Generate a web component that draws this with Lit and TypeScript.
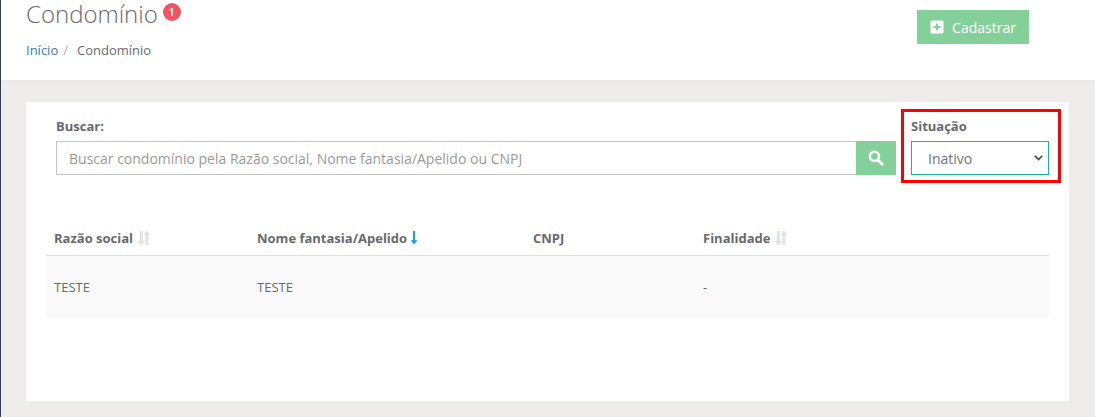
import { css, html, LitElement } from "lit";
import { customElement } from "lit/decorators.js";

const sortIcon = html`<svg class="sort" width="14" height="16" viewBox="0 0 14 16">
  <path d="M2.800 1h3v10h2.200L4.300 15.500.6 11h2.200z" fill="#e2e2e2"></path>
  <path d="M8.400 5H6.200L9.900.5 13.600 5h-2.200v10h-3z" fill="#e2e2e2"></path>
</svg>`;

const columns = [
  { label: "Razão social", width: 203, icon: sortIcon },
  {
    label: "Nome fantasia/Apelido",
    width: 276,
    icon: html`<svg class="sort active" width="8" height="15" viewBox="0 0 8 15">
      <path d="M2.900 1h2.200v9.200h2.400L4 14.400.5 10.200h2.400z" fill="#1c9cf0"></path>
    </svg>`,
  },
  { label: "CNPJ", width: 170, icon: null },
  { label: "Finalidade", width: 0, icon: sortIcon },
];

const rows = [["TESTE", "TESTE", "", "-"]];

@customElement("app-root")
export class AppRoot extends LitElement {
  static styles = css`
    :host {
      display: block;
      position: relative;
      width: 1095px;
      height: 417px;
      overflow: hidden;
      background: #eeebeb;
      font-family: "Open Sans", sans-serif;
      font-size: 13px;
      color: #676a6c;
      box-sizing: border-box;
      border-left: 1px solid #2f4050;
    }
    * {
      box-sizing: border-box;
    }
    .page-heading {
      height: 81px;
      background: #fff;
      border-bottom: 1px solid #e7e7e7;
      padding-left: 25px;
      display: flex;
      justify-content: space-between;
    }
    h2 {
      margin: 0;
      font-size: 24px;
      line-height: 28px;
      font-weight: 300;
      display: flex;
      align-items: flex-start;
    }
    .badge {
      width: 18px;
      height: 18px;
      margin: 3px 0 0 5px;
      border-radius: 50%;
      background: #ed5565;
      color: #fff;
      font-size: 10px;
      font-weight: 600;
      line-height: 18px;
      text-align: center;
    }
    .breadcrumb {
      margin-top: 13px;
      line-height: 18px;
      display: flex;
    }
    .breadcrumb a {
      color: #337ab7;
    }
    .breadcrumb .sep {
      color: #aaa;
      padding: 0 9px 0 5px;
    }
    .add {
      margin: 10px 66px 0 0;
      width: 112px;
      height: 34px;
      border: 0;
      background: #84d09a;
      color: #fff;
      font: 14px "Open Sans", sans-serif;
      display: flex;
      align-items: center;
      justify-content: center;
      gap: 8px;
      padding: 0;
    }
    .card {
      margin: 21px 0 0 25px;
      width: 1043px;
      height: 299px;
      background: #fff;
      padding: 16px 20px 0;
    }
    .filters {
      display: flex;
      padding-left: 10px;
    }
    label {
      display: block;
      font-weight: 700;
      font-size: 13px;
      line-height: 17px;
      margin-bottom: 6px;
    }
    .search {
      width: 840px;
    }
    .search-row {
      display: flex;
      height: 34px;
    }
    .search-row input {
      width: 800px;
      height: 34px;
      border: 1px solid #c4c4c4;
      border-right: 0;
      border-radius: 1px 0 0 1px;
      padding: 0 12px;
      font: 14px "Open Sans", sans-serif;
      outline: none;
    }
    .search-row input::placeholder {
      color: #9a9a9a;
      opacity: 1;
    }
    .search-row button {
      width: 40px;
      height: 34px;
      border: 0;
      padding: 0;
      background: #84d09a;
      display: flex;
      align-items: center;
      justify-content: center;
    }
    .status {
      margin-left: 15px;
      width: 138px;
    }
    .select {
      height: 34px;
      border: 1px solid #1ab394;
      padding: 0 5px 0 16px;
      display: flex;
      align-items: center;
      justify-content: space-between;
      font-size: 14px;
      color: #6d7580;
    }
    table {
      margin-top: 46px;
      border-collapse: collapse;
      table-layout: fixed;
      width: 1003px;
    }
    th {
      height: 34px;
      padding: 0 8px 2px;
      text-align: left;
      font-size: 13px;
      font-weight: 700;
      white-space: nowrap;
      border-bottom: 1px solid #dedede;
    }
    th span {
      vertical-align: middle;
    }
    .sort {
      vertical-align: middle;
      margin-left: 4px;
    }
    .sort.active {
      margin-left: 3px;
    }
    td {
      height: 63px;
      padding: 1px 8px 0;
      background: #f9f9f9;
      font-size: 13px;
    }
    .marker {
      position: absolute;
      left: 900px;
      top: 109px;
      width: 160px;
      height: 74px;
      border: 3px solid #f00;
      pointer-events: none;
    }
  `;

  render() {
    return html`
      <header class="page-heading">
        <div>
          <h2>Condomínio<span class="badge">1</span></h2>
          <div class="breadcrumb">
            <a>Início</a><span class="sep">/</span><span>Condomínio</span>
          </div>
        </div>
        <button class="add">
          <svg width="14" height="14" viewBox="0 0 14 14">
            <path
              d="M2 .5h10A1.500 1.500 0 0 1 13.500 2v10a1.500 1.500 0 0 1-1.500 1.500H2A1.500 1.500 0 0 1 .5 12V2A1.500 1.500 0 0 1 2 .5zM6 3.500V6H3.500v2H6v2.500h2V8h2.500V6H8V3.500z"
              fill="#fff"
              fill-rule="evenodd"
            ></path>
          </svg>
          Cadastrar
        </button>
      </header>
      <section class="card">
        <div class="filters">
          <div class="search">
            <label>Buscar:</label>
            <div class="search-row">
              <input placeholder="Buscar condomínio pela Razão social, Nome fantasia/Apelido ou CNPJ" />
              <button>
                <svg width="16" height="16" viewBox="0 0 15 15">
                  <circle cx="6" cy="6" r="4.300" fill="none" stroke="#fff" stroke-width="2.400"></circle>
                  <path d="M9.300 9.300l4 4" stroke="#fff" stroke-width="2.800" stroke-linecap="round"></path>
                </svg>
              </button>
            </div>
          </div>
          <div class="status">
            <label>Situação</label>
            <div class="select">
              Inativo
              <svg width="9" height="6" viewBox="0 0 9 6">
                <path d="M.8.800l3.700 3.700L8.200.8" fill="none" stroke="#555" stroke-width="1.800"></path>
              </svg>
            </div>
          </div>
        </div>
        <table>
          <colgroup>
            ${columns.map((c) => html`<col style=${c.width ? `width:${c.width}px` : ""} />`)}
          </colgroup>
          <thead>
            <tr>
              ${columns.map((c) => html`<th><span>${c.label}</span>${c.icon}</th>`)}
            </tr>
          </thead>
          <tbody>
            ${rows.map((r) => html`<tr>${r.map((v) => html`<td>${v}</td>`)}</tr>`)}
          </tbody>
        </table>
      </section>
      <div class="marker"></div>
    `;
  }
}
